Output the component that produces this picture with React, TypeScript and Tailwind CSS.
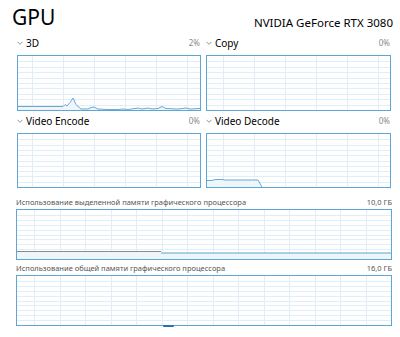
const font = "font-['Noto_Sans','Open_Sans',sans-serif]";

type Pt = [number, number];

function Grid({ w, h, colStep, colOffset, rows }: { w: number; h: number; colStep: number; colOffset: number; rows: number }) {
	const cols: number[] = [];
	for (let x = colOffset; x < w; x += colStep) cols.push(Math.round(x));
	const rowLines = Array.from({ length: rows - 1 }, (_, i) => ((i + 1) * h) / rows);
	return (
		<g stroke="#e2eef7" strokeWidth={1} shapeRendering="crispEdges">
			{cols.map((x) => (
				<line key={`c${x}`} x1={x + 0.5} y1={0} x2={x + 0.5} y2={h} />
			))}
			{rowLines.map((y) => (
				<line key={`r${y}`} x1={0} y1={Math.round(y) + 0.5} x2={w} y2={Math.round(y) + 0.5} />
			))}
		</g>
	);
}

function Chart({
	w,
	h,
	colStep,
	colOffset,
	rows = 10,
	children,
}: {
	w: number;
	h: number;
	colStep: number;
	colOffset: number;
	rows?: number;
	children?: React.ReactNode;
}) {
	return (
		<div className="border border-[#5ea6d3] bg-white" style={{ width: w + 2, height: h + 2 }}>
			<svg width={w} height={h} viewBox={`0 0 ${w} ${h}`} className="block">
				<Grid w={w} h={h} colStep={colStep} colOffset={colOffset} rows={rows} />
				{children}
			</svg>
		</div>
	);
}

function Area({ pts, h, stroke = "#6aa9d6" }: { pts: Pt[]; h: number; stroke?: string }) {
	const line = pts.map((p) => p.join(",")).join(" ");
	const first = pts[0];
	const last = pts[pts.length - 1];
	return (
		<g>
			<polygon points={`${first[0]},${h} ${line} ${last[0]},${h}`} fill="#eef5fb" />
			<polyline points={line} fill="none" stroke={stroke} strokeWidth={1} />
		</g>
	);
}

function Chevron() {
	return (
		<svg width="6" height="4" viewBox="0 0 6 4" className="mr-[3px]">
			<path d="M0.5 0.8 L3 3.3 L5.5 0.8" fill="none" stroke="#777" strokeWidth="0.8" />
		</svg>
	);
}

function PanelHead({ label, value }: { label: string; value: string }) {
	return (
		<div className="flex items-center justify-between h-[22px] pb-[2px]">
			<div className="flex items-center text-[10px] text-black leading-none">
				<Chevron />
				{label}
			</div>
			<span className="text-[8px] text-[#8a8a8a] leading-none pr-[1px]">{value}</span>
		</div>
	);
}

const d3: Pt[] = [
	[0, 50.5], [45, 50.5], [47, 48.5], [49, 50], [52, 46.5], [55, 42], [58, 48.5], [63, 53], [70, 53], [73, 51.5], [76, 51],
	[80, 53], [90, 53.5], [100, 53.5], [105, 53], [110, 53.5], [120, 52], [124, 53], [130, 52], [134, 53],
	[140, 52.5], [144, 50.5], [148, 52.5], [160, 53], [168, 52], [172, 53], [182, 52.5],
];

const decode: Pt[] = [
	[0, 46.5], [5, 46.5], [8, 45.5], [15, 45.5], [18, 46], [51, 46], [55, 53],
];

export default function App() {
	return (
		<div className={`relative w-[400px] h-[337px] overflow-hidden bg-white ${font}`}>
			<div className="flex items-end justify-between pl-[12px] pr-[7px] h-[33px]">
				<span className="text-[21px] leading-none text-black pb-[5px]">GPU</span>
				<span className="text-[11.5px] leading-none text-black pb-[5px]">NVIDIA GeForce RTX 3080</span>
			</div>
			<div className="grid grid-cols-[184px_185px] gap-x-[5px] pl-[17px]">
				<div>
					<PanelHead label="3D" value="2%" />
					<Chart w={182} h={54} colStep={31} colOffset={14}>
						<Area pts={d3} h={54} />
					</Chart>
				</div>
				<div>
					<PanelHead label="Copy" value="0%" />
					<Chart w={183} h={54} colStep={31} colOffset={16} />
				</div>
				<div>
					<PanelHead label="Video Encode" value="0%" />
					<Chart w={182} h={53} colStep={31} colOffset={14} />
				</div>
				<div>
					<PanelHead label="Video Decode" value="0%" />
					<Chart w={183} h={53} colStep={31} colOffset={16}>
						<Area pts={decode} h={53} />
					</Chart>
				</div>
			</div>
			<div className="pl-[16px] pr-[8px] pt-[8px] text-[7.5px] text-[#555] leading-none">
				<div className="flex items-center justify-between h-[13px]">
					<span>Использование выделенной памяти графического процессора</span>
					<span>10,0 ГБ</span>
				</div>
				<Chart w={374} h={49} colStep={25.5} colOffset={17}>
					<polygon points="0,41.5 144,41.5 144,43 374,43 374,49 0,49" fill="#eef5fb" />
					<polyline points="0,41.5 144,41.5" fill="none" stroke="#8a8a8a" strokeWidth={1} />
					<polyline points="144,43 374,43" fill="none" stroke="#5ea6d3" strokeWidth={1.2} />
				</Chart>
				<div className="flex items-center justify-between h-[13px] mt-[2px]">
					<span>Использование общей памяти графического процессора</span>
					<span>16,0 ГБ</span>
				</div>
				<Chart w={374} h={49} colStep={25.5} colOffset={17} />
			</div>
			<div className="absolute left-[163px] top-[325px] h-[2px] w-[11px] rounded-full bg-[#2a6fae]" />
		</div>
	);
}
